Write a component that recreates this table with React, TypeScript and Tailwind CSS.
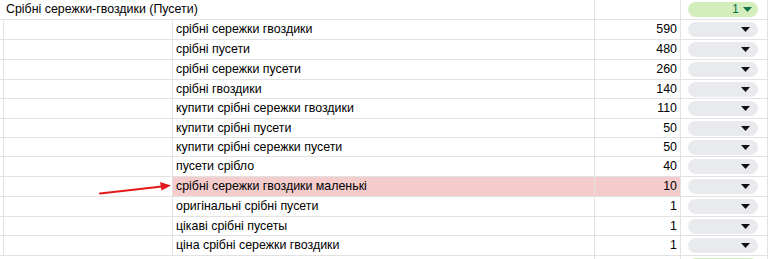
import React from "react";

type Row = {
  keyword: string;
  volume: number;
  h: string;
  highlight?: boolean;
};

const rows: Row[] = [
  { keyword: "срібні сережки гвоздики", volume: 590, h: "h-[20px]" },
  { keyword: "срібні пусети", volume: 480, h: "h-[20px]" },
  { keyword: "срібні сережки пусети", volume: 260, h: "h-[20px]" },
  { keyword: "срібні гвоздики", volume: 140, h: "h-[19px]" },
  { keyword: "купити срібні сережки гвоздики", volume: 110, h: "h-[20px]" },
  { keyword: "купити срібні пусети", volume: 50, h: "h-[19px]" },
  { keyword: "купити срібні сережки пусети", volume: 50, h: "h-[19px]" },
  { keyword: "пусети срібло", volume: 40, h: "h-[20px]" },
  { keyword: "срібні сережки гвоздики маленькі", volume: 10, h: "h-[20px]", highlight: true },
  { keyword: "оригінальні срібні пусети", volume: 1, h: "h-[20px]" },
  { keyword: "цікаві срібні пусеты", volume: 1, h: "h-[19px]" },
  { keyword: "ціна срібні сережки гвоздики", volume: 1, h: "h-[20px]" },
];

const cols = "grid grid-cols-[4px_169px_422px_86px_87px]";

const Caret = ({ className }: { className: string }) => (
  <svg width="9" height="5" viewBox="0 0 9 5" className={className}>
    <path d="M0 0h9L4.5 5z" fill="currentColor" />
  </svg>
);

const Chip = ({ value }: { value?: string }) =>
  value ? (
    <div className="ml-[7px] flex h-[15px] w-[70px] items-center justify-end rounded-full bg-[#d4edbc] pr-[6px] text-[#11734b]">
      <span className="mr-[4px] leading-none">{value}</span>
      <Caret className="text-[#11734b]" />
    </div>
  ) : (
    <div className="ml-[7px] flex h-[15px] w-[70px] items-center justify-end rounded-full bg-[#e8eaed] pr-[8px] text-black">
      <Caret className="text-[#111]" />
    </div>
  );

export default function App() {
  return (
    <div
      className="relative h-[259px] w-[768px] overflow-hidden bg-white text-[12.4px] text-black"
      style={{ fontFamily: '"Liberation Sans", Arial, sans-serif' }}
    >
      {/* group header */}
      <div className={`${cols} h-[20px] border-b border-[#e2e2e2]`}>
        <div className="col-span-3 flex items-center border-r border-[#e2e2e2] pl-[6px] whitespace-nowrap">
          Срібні сережки-гвоздики (Пусети)
        </div>
        <div className="border-r border-[#e2e2e2]" />
        <div className="flex items-center border-r border-[#e2e2e2]">
          <Chip value="1" />
        </div>
      </div>

      {rows.map((r) => (
        <div key={r.keyword} className={`${cols} ${r.h} border-b border-[#e2e2e2]`}>
          <div className="border-r border-[#e2e2e2]" />
          <div className="border-r border-[#e2e2e2]" />
          <div
            className={`flex items-center border-r border-[#e2e2e2] pl-[3px] whitespace-nowrap ${r.highlight ? "bg-[#f4cccc]" : ""}`}
          >
            {r.keyword}
          </div>
          <div
            className={`flex items-center justify-end border-r border-[#e2e2e2] pr-[3px] ${r.highlight ? "bg-[#f4cccc]" : ""}`}
          >
            {r.volume}
          </div>
          <div className="flex items-center border-r border-[#e2e2e2]">
            <Chip />
          </div>
        </div>
      ))}

      {/* next group, cut off at the bottom */}
      <div className={`${cols} h-[20px] border-b border-[#e2e2e2]`}>
        <div className="col-span-3 flex items-center border-r border-[#e2e2e2] pl-[6px] whitespace-nowrap">
          Срібні сережки-кільця
        </div>
        <div className="border-r border-[#e2e2e2]" />
        <div className="flex items-center border-r border-[#e2e2e2]">
          <Chip value="1" />
        </div>
      </div>

      {/* annotation arrow */}
      <svg
        className="pointer-events-none absolute left-0 top-0"
        width="768"
        height="259"
        viewBox="0 0 768 259"
      >
        <line x1="100" y1="193.5" x2="162" y2="186.5" stroke="#e31b1b" strokeWidth="2.2" strokeLinecap="round" />
        <path d="M171 185.5 L160 182 L161.5 190.5 Z" fill="#e31b1b" />
      </svg>
    </div>
  );
}
